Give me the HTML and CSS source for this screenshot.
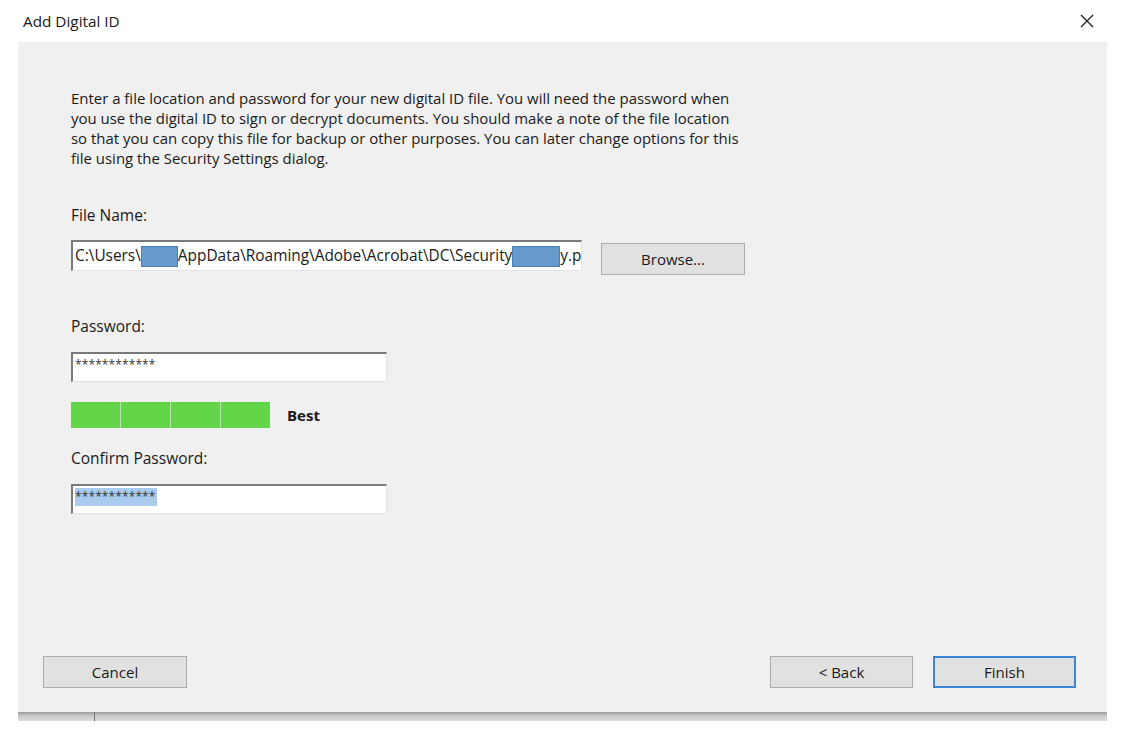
FILE: index.html
```html
<!DOCTYPE html>
<html lang="en">
<head>
    <meta charset="UTF-8">
    <title>Add Digital ID</title>
    <link rel="stylesheet" href="styles.css">
</head>
<body>

    <div class="titlebar">
        <span class="title">Add Digital ID</span>
        <svg class="close" width="14" height="14" viewBox="0 0 14 14">
            <path d="M1 1 L13 13 M13 1 L1 13" stroke="#222" stroke-width="1.3" fill="none"/>
        </svg>
    </div>

    <div class="panel">
        <div class="content">
            <p class="intro">Enter a file location and password for your new digital ID file. You will need the password when<br>
                you use the digital ID to sign or decrypt documents. You should make a note of the file location<br>
                so that you can copy this file for backup or other purposes. You can later change options for this<br>
                file using the Security Settings dialog.</p>

            <div class="label label-file">File Name:</div>
            <div class="file-row">
                <div class="field field-file">
                    <span>C:\Users\</span><span class="redact redact-user"></span><span>AppData\Roaming\Adobe\Acrobat\DC\Security</span><span class="redact redact-name"></span><span>y.p</span>
                </div>
                <div class="btn btn-browse">Browse...</div>
            </div>

            <div class="label label-pass">Password:</div>
            <div class="field field-pass"><span>************</span></div>

            <div class="strength">
                <div class="bars">
                    <div class="bar"></div>
                    <div class="bar"></div>
                    <div class="bar"></div>
                    <div class="bar"></div>
                </div>
                <span class="strength-text">Best</span>
            </div>

            <div class="label label-confirm">Confirm Password:</div>
            <div class="field field-pass"><span class="selected">************</span></div>
        </div>

        <div class="footer">
            <div class="btn">Cancel</div>
            <div class="footer-right">
                <div class="btn">&lt; Back</div>
                <div class="btn btn-default">Finish</div>
            </div>
        </div>
    </div>

    <div class="shadow">
        <div class="shadow-tick"></div>
    </div>

</body>
</html>
```

FILE: styles.css
```css
body {
    margin: 0;
    background: #fff;
    font-family: 'Open Sans', 'Noto Sans', sans-serif;
    font-size: 15px;
    color: #1a1a1a;
}
.titlebar {
    height: 42px;
    display: flex;
    align-items: center;
    justify-content: space-between;
    padding: 0 32px 0 23px;
}
.title {
    font-size: 15.3px;
    margin-top: -1px;
}
.close {
    margin-top: -1px;
}
.panel {
    margin-left: 18px;
    width: 1089px;
    height: 670px;
    background: #f0f0f0;
    display: flex;
    flex-direction: column;
}
.content {
    padding: 46px 0 0 53px;
}
.intro {
    margin: 0;
    font-size: 14.95px;
    line-height: 20px;
    white-space: nowrap;
}
.label {
    line-height: 20px;
    font-size: 15.5px;
}
.label-file { margin-top: 37px; }
.label-pass { margin-top: 41px; }
.label-confirm { margin-top: 20px; }

.file-row {
    display: flex;
    align-items: flex-start;
    margin-top: 15px;
}
.field {
    background: #fff;
    border-top: 2px solid #7a7a7a;
    border-left: 2px solid #7a7a7a;
    border-right: 1px solid #e3e3e3;
    border-bottom: 1px solid #e3e3e3;
    box-sizing: border-box;
    display: flex;
    align-items: flex-start;
    padding: 3px 0 0 2px;
    overflow: hidden;
    white-space: nowrap;
    line-height: 21px;
}
.field-file {
    width: 511px;
    height: 31px;
    font-size: 15.4px;
}
.field-pass {
    width: 316px;
    height: 30px;
    margin-top: 16px;
    font-size: 12px;
    color: #333;
    letter-spacing: 0.1px;
    padding-top: 1px;
    line-height: 20px;
}
.selected {
    background: #a9cbee;
    line-height: 18px;
    padding-right: 1px;
    margin-top: 1px;
}
.redact {
    display: inline-block;
    flex-shrink: 0;
    height: 21px;
    background: #6699cc;
    border: 1px solid #4b7fb5;
    box-sizing: border-box;
    margin-top: 1px;
}
.redact-user { width: 37px; }
.redact-name { width: 48px; }

.btn {
    width: 144px;
    height: 32px;
    box-sizing: border-box;
    background: #e1e1e1;
    border: 1px solid #adadad;
    display: flex;
    align-items: center;
    justify-content: center;
    font-size: 15px;
}
.btn-browse {
    margin: 3px 0 0 19px;
}
.btn-default {
    border: 2px solid #3f86d9;
}

.strength {
    display: flex;
    align-items: center;
    margin-top: 20px;
}
.bars {
    display: flex;
    gap: 1px;
    background: #b8e6a8;
}
.bar {
    width: 49px;
    height: 26px;
    background: #63d549;
}
.strength-text {
    font-weight: bold;
    margin-left: 17px;
    font-size: 15px;
}

.footer {
    margin-top: auto;
    padding: 0 31px 24px 25px;
    display: flex;
    justify-content: space-between;
}
.footer-right {
    display: flex;
    gap: 20px;
}
.footer-right .btn {
    width: 143px;
}

.shadow {
    margin-left: 18px;
    width: 1089px;
    height: 9px;
    background: linear-gradient(#9a9a9a, #c8c8c8 40%, #dcdcdc);
    position: relative;
}
.shadow-tick {
    position: absolute;
    left: 76px;
    top: 0;
    width: 1px;
    height: 9px;
    background: #777;
}
```
